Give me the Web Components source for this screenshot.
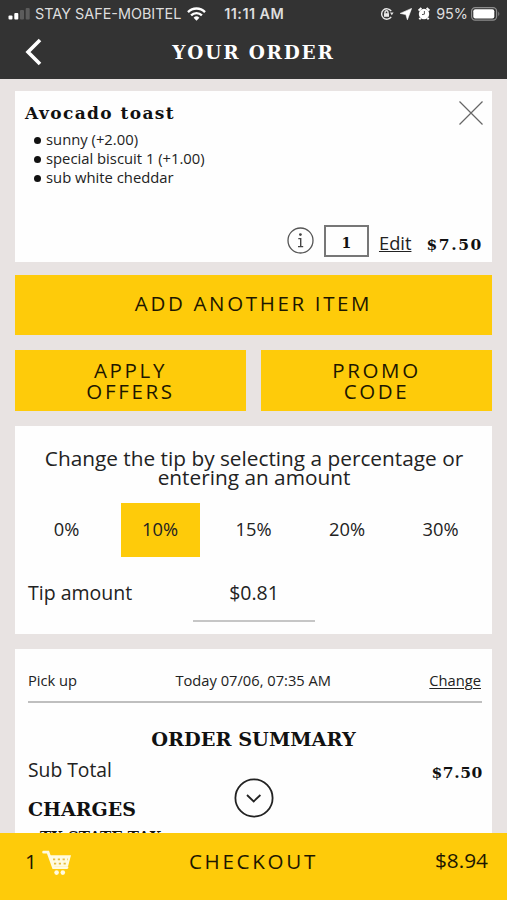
<!DOCTYPE html>
<html lang="en">
<head>
<meta charset="utf-8">
<meta name="viewport" content="width=device-width, initial-scale=1">
<title>Your Order</title>
<style>
  html, body {
    margin: 0;
    height: 100%;
  }

  body {
    --yellow: #fecb0a;
    --dark: #333333;
    --slab: "DejaVu Serif", serif;
    font-family: "Open Sans", "Noto Sans", sans-serif;
    color: #222;
    background: #e8e3e2;
    overflow: hidden;
  }
</style>
</head>
<body>
<order-page></order-page>

<script>
class StatusBar extends HTMLElement {
  constructor() {
    super();
    const shadowRoot = this.attachShadow({ mode: 'open' });
    shadowRoot.innerHTML = `
      <style>
      :host {
        display: flex;
        align-items: center;
        height: 27px;
        padding: 0 6px 0 8px;
        box-sizing: border-box;
        font: 14.4px/27px Inter, sans-serif;
        color: #dedede;
        white-space: nowrap;
      }
      svg { display: block; flex: none; }
      .carrier { margin-left: 5px; }
      .wifi { margin-left: 6px; }
      .time { margin-left: 18px; font-weight: 600; letter-spacing: 0.45px; }
      .right { margin-left: auto; display: flex; align-items: center; }
      .battery { letter-spacing: 0; margin: 0 3px 0 6px; }
      </style>
      <svg width="22" height="12" viewBox="0 0 22 12">
        <rect x="0.5" y="7.5" width="4" height="4" rx="1" fill="#fff"/>
        <rect x="6.3" y="5" width="4" height="6.5" rx="1" fill="#fff"/>
        <rect x="12" y="2" width="4" height="9.5" rx="1" fill="#5c5c5c"/>
        <rect x="17.7" y="0" width="4" height="11.5" rx="1" fill="#5c5c5c"/>
      </svg>
      <span class="carrier">STAY SAFE-MOBITEL</span>
      <svg class="wifi" width="19" height="14" viewBox="0 0 19 14" fill="none" stroke="#fff" stroke-width="2.4">
        <path d="M1 5.1a12 12 0 0 1 17 0"/>
        <path d="M4.1 8.4a7.6 7.6 0 0 1 10.8 0"/>
        <path d="M6.6 10.7a4.1 4.1 0 0 1 5.8 0L9.5 13.8z" fill="#fff" stroke="none"/>
      </svg>
      <span class="time">11:11 AM</span>
      <div class="right">
        <svg width="14" height="12" viewBox="0 0 14 12" fill="none" stroke="#e8e8e8" stroke-width="1.4">
          <path d="M11.2 3.2A5.2 5.2 0 1 0 11.2 8.8"/>
          <path d="M10 4.6h3.6L11.8 7.2z" fill="#e8e8e8" stroke="none"/>
          <rect x="4" y="5.2" width="5" height="3.6" fill="#e8e8e8" stroke="none"/>
          <path d="M5 5.4V4.3a1.5 1.5 0 0 1 3 0v1.1"/>
        </svg>
        <svg style="margin-left:6px" width="12" height="12" viewBox="0 0 12 12"><path d="M11.6 0.4 7.4 11.8 5.8 6.6 0.2 5.4z" fill="#fff" stroke="#fff" stroke-width="0.6"/></svg>
        <svg style="margin-left:6px" width="12" height="13" viewBox="0 0 12 13">
          <circle cx="6" cy="7" r="5.2" fill="#fff"/>
          <path d="M0.6 3.6 3.4 1M11.4 3.6 8.6 1M2.4 11 1.4 12.4M9.6 11l1 1.4" stroke="#fff" stroke-width="2"/>
          <path d="M6.4 4v3.2L4 7.6" stroke="#555" fill="none"/>
        </svg>
        <span class="battery">95%</span>
        <svg width="30" height="14" viewBox="0 0 30 14">
          <rect x="0.6" y="0.6" width="25" height="12.6" rx="3.6" fill="none" stroke="#8d8d8d" stroke-width="1.2"/>
          <rect x="2.3" y="2.3" width="21" height="9.3" rx="2" fill="#fff"/>
          <path d="M27.3 4.4q2 2.4 0 4.8z" fill="#8d8d8d"/>
        </svg>
      </div>
    `;
  }
}

class PageHeader extends HTMLElement {
  constructor() {
    super();
    const shadowRoot = this.attachShadow({ mode: 'open' });
    shadowRoot.innerHTML = `
      <style>
      :host {
        display: block;
        height: 79px;
        background: var(--dark);
        flex: none;
      }
      .row {
        display: grid;
        grid-template-columns: 60px 1fr 60px;
        align-items: center;
        height: 51px;
      }
      svg { margin: -2px 0 0 24px; }
      h1 {
        margin: 0;
        text-align: center;
        color: #fff;
        font: bold 18.5px/24px var(--slab);
        letter-spacing: 1.8px;
      }
      </style>
      <status-bar></status-bar>
      <div class="row">
        <svg width="18" height="28" viewBox="0 0 18 28"><path d="M16 2 4 14 16 26" fill="none" stroke="#fff" stroke-width="3.6"/></svg>
        <h1><slot></slot></h1>
      </div>
    `;
  }
}

class OrderCard extends HTMLElement {
  constructor() {
    super();
    const shadowRoot = this.attachShadow({ mode: 'open' });
    shadowRoot.innerHTML = `
      <style>
      :host {
        display: block;
        box-sizing: border-box;
        background: #fefefe;
        flex: none;
      }
      </style>
      <slot></slot>
    `;
  }
}

class OrderItem extends HTMLElement {
  constructor() {
    super();
    const shadowRoot = this.attachShadow({ mode: 'open' });
    shadowRoot.innerHTML = `
      <style>
      :host {
        display: flex;
        flex-direction: column;
        height: 171px;
        box-sizing: border-box;
        padding: 10px 9px 5px 10px;
      }
      .top { display: flex; justify-content: space-between; }
      h2 {
        margin: 0;
        font: bold 17px/25px var(--slab);
        letter-spacing: 1.4px;
        color: #111;
      }
      ::slotted(ul) {
        margin: 4px 0 0;
        padding: 0 0 0 9px;
        list-style: none;
        font-size: 14.8px;
        line-height: 19px;
      }
      .bottom {
        display: flex;
        align-items: center;
        justify-content: flex-end;
        margin-top: auto;
        height: 33px;
      }
      .qty {
        width: 45px;
        height: 32px;
        box-sizing: border-box;
        border: 2px solid #777;
        margin: 0 10px;
        text-align: center;
        font: bold 14px/33px var(--slab);
        color: #111;
      }
      .edit { font-size: 18.3px; line-height: 24px; text-decoration: underline; margin-top: 5px; }
      .price {
        margin: 9px 0 0 15px;
        font: bold 15.5px/20px var(--slab);
        letter-spacing: 1.6px;
        color: #111;
      }
      </style>
      <div class="top">
        <h2><slot name="name"></slot></h2>
        <svg width="24" height="24" viewBox="0 0 24 24"><path d="M0.5 0.5 23.5 23.5M23.5 0.5 0.5 23.5" stroke="#666" stroke-width="1.2"/></svg>
      </div>
      <slot></slot>
      <div class="bottom">
        <svg width="27" height="27" viewBox="0 0 27 27">
          <circle cx="13.5" cy="13.5" r="12.5" fill="none" stroke="#555" stroke-width="1.3"/>
          <circle cx="13.4" cy="7.6" r="1.4" fill="#444"/>
          <path d="M11.3 11.6h2.4V19.4M11 19.6h5.2" stroke="#444" stroke-width="1.4" fill="none"/>
        </svg>
        <div class="qty">1</div>
        <span class="edit">Edit</span>
        <span class="price">$7.50</span>
      </div>
    `;
  }
}

class ActionButton extends HTMLElement {
  constructor() {
    super();
    const shadowRoot = this.attachShadow({ mode: 'open' });
    shadowRoot.innerHTML = `
      <style>
      :host {
        display: flex;
        align-items: center;
        justify-content: center;
        flex: 1;
        height: 61px;
        background: var(--yellow);
        text-align: center;
        font-size: 20.5px;
        line-height: 21px;
        letter-spacing: 2.65px;
        color: #1d1700;
      }
      :host([wide]) {
        height: 60px;
        box-sizing: border-box;
        padding-bottom: 3px;
      }
      </style>
      <div><slot></slot></div>
    `;
  }
}

class TipPicker extends HTMLElement {
  constructor() {
    super();
    const shadowRoot = this.attachShadow({ mode: 'open' });
    shadowRoot.innerHTML = `
      <style>
      :host {
        display: block;
        height: 208px;
        box-sizing: border-box;
        padding: 23px 12px 0 13px;
      }
      p {
        margin: 0;
        text-align: center;
        font-size: 20.8px;
        line-height: 19px;
      }
      .options {
        display: grid;
        grid-template-columns: repeat(5, 79px);
        column-gap: 14.5px;
        height: 54px;
        margin: 16px 0 0 -1px;
      }
      .options span {
        text-align: center;
        font-size: 18.3px;
        line-height: 51px;
      }
      .options .selected { background: var(--yellow); }
      .amount {
        display: grid;
        grid-template-columns: 165px 122px;
        margin-top: 20px;
        font-size: 19.5px;
        line-height: 32px;
      }
      .amount div { height: 43px; border-bottom: 2px solid #c6c6c6; text-align: center; }
      </style>
      <p>Change the tip by selecting a percentage or<br>entering an amount</p>
      <div class="options">
        <span>0%</span><span class="selected">10%</span><span>15%</span><span>20%</span><span>30%</span>
      </div>
      <div class="amount"><span>Tip amount</span><div>$0.81</div></div>
    `;
  }
}

class OrderSummary extends HTMLElement {
  constructor() {
    super();
    const shadowRoot = this.attachShadow({ mode: 'open' });
    shadowRoot.innerHTML = `
      <style>
      :host {
        display: block;
        height: 260px;
        box-sizing: border-box;
        padding: 0 10px 0 13px;
        position: relative;
      }
      .pickup {
        display: flex;
        justify-content: space-between;
        height: 54px;
        box-sizing: border-box;
        padding: 21px 1px 0 0;
        border-bottom: 2px solid #bfbfbf;
        font-size: 14.7px;
        line-height: 21px;
      }
      .pickup u { text-underline-offset: 2px; }
      h2 {
        margin: 25px 3px 0 0;
        text-align: center;
        font: bold 19.3px/24px var(--slab);
        color: #111;
      }
      .total {
        display: flex;
        justify-content: space-between;
        font-size: 19.3px;
        line-height: 36px;
        height: 41px;
      }
      .total b {
        font: bold 15.5px/20px var(--slab);
        letter-spacing: 0.6px;
        margin: 11px -1px 0 0;
        color: #111;
      }
      h3 {
        margin: 4px 0 0;
        font: bold 19px/24px var(--slab);
        color: #111;
      }
      .tax {
        margin: 6px 0 0 12px;
        font: bold 15px/20px var(--slab);
        color: #111;
      }
      .more {
        position: absolute;
        left: 219px;
        top: 129px;
      }
      </style>
      <div class="pickup"><span>Pick up</span><span>Today 07/06, 07:35 AM</span><u>Change</u></div>
      <h2>ORDER SUMMARY</h2>
      <div class="total"><span>Sub Total</span><b>$7.50</b></div>
      <h3>CHARGES</h3>
      <div class="tax">TX STATE TAX</div>
      <svg class="more" width="40" height="40" viewBox="0 0 40 40" fill="none" stroke="#222">
        <circle cx="20" cy="20" r="18.6" stroke-width="1.8" fill="#fefefe"/>
        <path d="M13 17 19.7 23.4 26.4 17" stroke-width="1.8"/>
      </svg>
    `;
  }
}

class CheckoutBar extends HTMLElement {
  constructor() {
    super();
    const shadowRoot = this.attachShadow({ mode: 'open' });
    shadowRoot.innerHTML = `
      <style>
      :host {
        display: grid;
        grid-template-columns: 100px 1fr 106px;
        align-items: center;
        flex: none;
        height: 67px;
        box-sizing: border-box;
        padding: 0 19px 12px 25px;
        background: var(--yellow);
        color: #1d1700;
        font-size: 20.6px;
        line-height: 28px;
      }
      .count { display: flex; align-items: center; }
      svg { margin: 4px 0 0 5px; }
      .label { text-align: center; letter-spacing: 2.7px; }
      .sum { text-align: right; font-size: 20.8px; margin-bottom: 1px; }
      </style>
      <div class="count">1
        <svg width="30" height="26" viewBox="0 0 30 26">
          <path d="M1.6 2.2H6L11.5 17.6H25" fill="none" stroke="#fffbe0" stroke-width="2.8" stroke-linecap="round"/>
          <path d="M7.4 5.2H29L26 16.6H11.2z" fill="#fffbe0"/>
          <path d="M11 9.4h15M12 13.6h13" stroke="#e5bd3d" stroke-width="1.6" stroke-dasharray="2.2 2.6"/>
          <circle cx="14.6" cy="22.6" r="2.3" fill="#fffbe0"/>
          <circle cx="20.8" cy="22.6" r="2.3" fill="#fffbe0"/>
        </svg>
      </div>
      <div class="label">CHECKOUT</div>
      <div class="sum">$8.94</div>
    `;
  }
}

class OrderPage extends HTMLElement {
  constructor() {
    super();
    const shadowRoot = this.attachShadow({ mode: 'open' });
    shadowRoot.innerHTML = `
      <style>
      :host {
        display: flex;
        flex-direction: column;
        height: 100vh;
      }
      main {
        display: flex;
        flex-direction: column;
        flex: 1;
        min-height: 0;
        overflow: hidden;
        padding: 12px 15px 0;
        gap: 15px;
      }
      .buttons { display: flex; gap: 15px; flex: none; }
      .first { margin-top: -2px; }
      li::before {
        content: "";
        display: inline-block;
        width: 7px;
        height: 7px;
        margin-right: 5px;
        border-radius: 50%;
        background: #111;
        vertical-align: 1px;
      }
      </style>
      <page-header>YOUR ORDER</page-header>
      <main>
        <order-card>
          <order-item>
            <span slot="name">Avocado toast</span>
            <ul>
              <li>sunny (+2.00)</li>
              <li>special biscuit 1 (+1.00)</li>
              <li>sub white cheddar</li>
            </ul>
          </order-item>
        </order-card>
        <div class="buttons first"><action-button wide>ADD ANOTHER ITEM</action-button></div>
        <div class="buttons">
          <action-button>APPLY<br>OFFERS</action-button>
          <action-button>PROMO<br>CODE</action-button>
        </div>
        <order-card><tip-picker></tip-picker></order-card>
        <order-card><order-summary></order-summary></order-card>
      </main>
      <checkout-bar></checkout-bar>
    `;
  }
}

customElements.define('status-bar', StatusBar);
customElements.define('page-header', PageHeader);
customElements.define('order-card', OrderCard);
customElements.define('order-item', OrderItem);
customElements.define('action-button', ActionButton);
customElements.define('tip-picker', TipPicker);
customElements.define('order-summary', OrderSummary);
customElements.define('checkout-bar', CheckoutBar);
customElements.define('order-page', OrderPage);
</script>
</body>
</html>
